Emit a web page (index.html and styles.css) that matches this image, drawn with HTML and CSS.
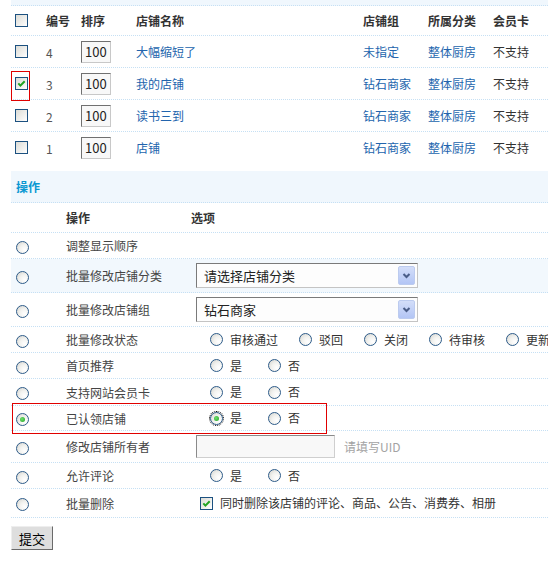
FILE: index.html
```html
<!DOCTYPE html>
<html lang="zh-CN">
<head>
<meta charset="utf-8">
<title>店铺管理</title>
<link rel="stylesheet" href="styles.css">
</head>
<body>
<div class="page">
  <div class="top-strip"></div>

  <div class="list">
    <div class="list-row list-head">
      <span class="c-check"><span class="cb"></span></span>
      <span>编号</span>
      <span>排序</span>
      <span>店铺名称</span>
      <span>店铺组</span>
      <span>所属分类</span>
      <span>会员卡</span>
    </div>
    <div class="list-row">
      <span class="c-check"><span class="cb"></span></span>
      <span class="num">4</span>
      <span><span class="txt order">100</span></span>
      <span><a class="link">大幅缩短了</a></span>
      <span><a class="link">未指定</a></span>
      <span><a class="link">整体厨房</a></span>
      <span>不支持</span>
    </div>
    <div class="list-row">
      <span class="c-check"><span class="cb checked"><svg viewBox="0 0 11 11" width="11" height="11"><path d="M2.3 5.4 L4.4 7.6 L8.7 3.2" fill="none" stroke="#22a322" stroke-width="2"/></svg></span></span>
      <span class="num">3</span>
      <span><span class="txt order">100</span></span>
      <span><a class="link">我的店铺</a></span>
      <span><a class="link">钻石商家</a></span>
      <span><a class="link">整体厨房</a></span>
      <span>不支持</span>
      <span class="mark mark-check"></span>
    </div>
    <div class="list-row">
      <span class="c-check"><span class="cb"></span></span>
      <span class="num">2</span>
      <span><span class="txt order">100</span></span>
      <span><a class="link">读书三到</a></span>
      <span><a class="link">钻石商家</a></span>
      <span><a class="link">整体厨房</a></span>
      <span>不支持</span>
    </div>
    <div class="list-row last">
      <span class="c-check"><span class="cb"></span></span>
      <span class="num">1</span>
      <span><span class="txt order">100</span></span>
      <span><a class="link">店铺</a></span>
      <span><a class="link">钻石商家</a></span>
      <span><a class="link">整体厨房</a></span>
      <span>不支持</span>
    </div>
  </div>

  <div class="section-title">操作</div>

  <div class="ops">
    <div class="op-row op-head">
      <span></span>
      <span>操作</span>
      <span>选项</span>
    </div>

    <div class="op-row">
      <span class="c-radio"><span class="rd"></span></span>
      <span class="op-label">调整显示顺序</span>
      <span></span>
    </div>

    <div class="op-row is-select hover">
      <span class="c-radio"><span class="rd"></span></span>
      <span class="op-label">批量修改店铺分类</span>
      <span class="opt-select">
        <span class="sel"><span class="sel-text">请选择店铺分类</span><span class="sel-btn"><svg viewBox="0 0 15 17" width="15" height="17"><path d="M4.5 7 L7.5 10 L10.5 7" fill="none" stroke="#4a5d88" stroke-width="2"/></svg></span></span>
      </span>
    </div>

    <div class="op-row is-select">
      <span class="c-radio"><span class="rd"></span></span>
      <span class="op-label">批量修改店铺组</span>
      <span class="opt-select">
        <span class="sel"><span class="sel-text">钻石商家</span><span class="sel-btn"><svg viewBox="0 0 15 17" width="15" height="17"><path d="M4.5 7 L7.5 10 L10.5 7" fill="none" stroke="#4a5d88" stroke-width="2"/></svg></span></span>
      </span>
    </div>

    <div class="op-row">
      <span class="c-radio"><span class="rd"></span></span>
      <span class="op-label">批量修改状态</span>
      <span class="opt-radios status">
        <span class="choice"><span class="rd"></span>审核通过</span>
        <span class="choice"><span class="rd"></span>驳回</span>
        <span class="choice"><span class="rd"></span>关闭</span>
        <span class="choice"><span class="rd"></span>待审核</span>
        <span class="choice"><span class="rd"></span>更新</span>
      </span>
    </div>

    <div class="op-row">
      <span class="c-radio"><span class="rd"></span></span>
      <span class="op-label">首页推荐</span>
      <span class="opt-radios">
        <span class="choice"><span class="rd"></span>是</span>
        <span class="choice"><span class="rd"></span>否</span>
      </span>
    </div>

    <div class="op-row is-wide">
      <span class="c-radio"><span class="rd"></span></span>
      <span class="op-label">支持网站会员卡</span>
      <span class="opt-radios">
        <span class="choice"><span class="rd"></span>是</span>
        <span class="choice"><span class="rd"></span>否</span>
      </span>
    </div>

    <div class="op-row is-narrow">
      <span class="c-radio"><span class="rd checked"></span></span>
      <span class="op-label">已认领店铺</span>
      <span class="opt-radios">
        <span class="choice"><span class="rd checked focus"></span>是</span>
        <span class="choice"><span class="rd"></span>否</span>
      </span>
      <span class="mark mark-row"></span>
    </div>

    <div class="op-row is-input">
      <span class="c-radio"><span class="rd"></span></span>
      <span class="op-label">修改店铺所有者</span>
      <span class="opt-input">
        <span class="txt uid"></span>
        <span class="hint">请填写UID</span>
      </span>
    </div>

    <div class="op-row">
      <span class="c-radio"><span class="rd"></span></span>
      <span class="op-label">允许评论</span>
      <span class="opt-radios">
        <span class="choice"><span class="rd"></span>是</span>
        <span class="choice"><span class="rd"></span>否</span>
      </span>
    </div>

    <div class="op-row is-check">
      <span class="c-radio"><span class="rd"></span></span>
      <span class="op-label">批量删除</span>
      <span class="opt-check">
        <span class="cb checked"><svg viewBox="0 0 11 11" width="11" height="11"><path d="M2.3 5.4 L4.4 7.6 L8.7 3.2" fill="none" stroke="#22a322" stroke-width="2"/></svg></span>
        <span>同时删除该店铺的评论、商品、公告、消费券、相册</span>
      </span>
    </div>
  </div>

  <button class="submit" type="button">提交</button>
</div>
</body>
</html>
```

FILE: styles.css
```css
html, body {
  margin: 0;
  padding: 0;
  overflow: hidden;
  background: #fff;
}

body {
  font-family: "Noto Sans CJK SC", "Microsoft YaHei", sans-serif;
  font-size: 12px;
  line-height: 18px;
  color: #333;
}

.page {
  padding-left: 11px;
}

.top-strip {
  height: 5px;
  background: #f0f7fd;
  border-bottom: 1px dotted #c6e0f4;
}

/* ---------- list table ---------- */
.list-row {
  position: relative;
  display: grid;
  grid-template-columns: 35px 35px 55px 227px 65px 65px 1fr;
  align-items: center;
  height: 31px;
  border-bottom: 1px dotted #c6e0f4;
  white-space: nowrap;
}

.list-row.last {
  border-bottom: none;
}

.list-head {
  height: 29px;
  font-weight: bold;
  color: #333;
}

.c-check {
  display: flex;
  align-items: center;
  padding-left: 4px;
}

.num {
  color: #555;
  padding-top: 2px;
}

.link {
  color: #2264ad;
  text-decoration: none;
}

/* inset text box */
.txt {
  display: inline-block;
  box-sizing: border-box;
  border: 1px solid;
  border-color: #707070 #c8c8c8 #c8c8c8 #707070;
  background: #f8f8f8;
  vertical-align: middle;
}

.order {
  width: 30px;
  height: 22px;
  line-height: 20px;
  padding-left: 3px;
  font-size: 13px;
  color: #222;
}

/* checkbox (XP look) */
.cb {
  display: inline-flex;
  align-items: center;
  justify-content: center;
  box-sizing: border-box;
  width: 13px;
  height: 13px;
  border: 1px solid #1c5180;
  background: linear-gradient(135deg, #dcdcd6 0%, #f4f4f2 70%, #ffffff 100%);
  flex: none;
}

/* radio (XP look) */
.rd {
  position: relative;
  display: inline-block;
  box-sizing: border-box;
  width: 13px;
  height: 13px;
  border: 1px solid #2d5b89;
  border-radius: 50%;
  background: radial-gradient(circle at 70% 70%, #ffffff 0%, #f2f2ef 45%, #d2d2cc 100%);
  flex: none;
}

.rd.checked::after {
  content: "";
  position: absolute;
  left: 3px;
  top: 3px;
  width: 5px;
  height: 5px;
  border-radius: 50%;
  background: radial-gradient(circle at 40% 40%, #6fe06f 0%, #21a121 100%);
}

.rd.focus {
  outline: 1px dotted #000;
  outline-offset: 0;
}

/* annotation boxes */
.mark {
  position: absolute;
  box-sizing: border-box;
  border: 1px solid #e00000;
  pointer-events: none;
}

.mark-check {
  left: 0;
  top: 3px;
  width: 19px;
  height: 30px;
}

.mark-row {
  left: 1px;
  top: -3px;
  width: 315px;
  height: 31px;
}

/* ---------- section ---------- */
.section-title {
  margin-top: 8px;
  height: 31px;
  line-height: 31px;
  padding-left: 5px;
  background: #f0f7fd;
  border-bottom: 1px dotted #c6e0f4;
  color: #0a98d2;
  font-weight: bold;
}

.op-row {
  position: relative;
  display: grid;
  grid-template-columns: 55px 125px 1fr;
  align-items: center;
  height: 25px;
  border-bottom: 1px dotted #c6e0f4;
  white-space: nowrap;
}

.op-head {
  height: 29px;
  font-weight: bold;
}

.op-row.hover {
  background: #f2f8fd;
}

.op-row.is-select {
  height: 33px;
}

.op-row.is-wide {
  height: 26px;
}

.op-row.is-narrow {
  height: 24px;
}

.op-row.is-input {
  height: 31px;
}

.op-row.is-check {
  height: 28px;
}

.c-radio {
  display: flex;
  align-items: center;
  padding-left: 5px;
  padding-top: 3px;
}

.op-label {
  color: #444;
  padding-top: 1px;
}

.opt-select {
  padding-left: 5px;
  display: flex;
}

.sel {
  display: flex;
  align-items: center;
  box-sizing: border-box;
  width: 222px;
  height: 25px;
  border: 1px solid;
  border-color: #7a7a7a #c4c4c4 #c4c4c4 #7a7a7a;
  background: #fdfdfd;
  padding-left: 7px;
  padding-right: 2px;
  color: #222;
  font-size: 13px;
}

.sel-btn {
  margin-left: auto;
  display: flex;
  box-sizing: border-box;
  width: 17px;
  height: 19px;
  border: 1px solid #bccbef;
  border-radius: 2px;
  background: linear-gradient(#d3def9, #b3c5f5);
}

.opt-radios {
  display: flex;
  align-items: center;
  padding-left: 19px;
}

.choice {
  display: inline-flex;
  align-items: center;
  gap: 7px;
  margin-right: 26px;
  color: #333;
}

.status .choice {
  margin-right: 21px;
}

.opt-input {
  display: flex;
  align-items: center;
  padding-left: 5px;
  gap: 9px;
}

.uid {
  width: 139px;
  height: 23px;
  border-color: #8a8a8a #cfcfcf #cfcfcf #8a8a8a;
}

.hint {
  color: #a3a3a3;
}

.opt-check {
  display: flex;
  align-items: center;
  padding-left: 9px;
  gap: 7px;
}

.submit {
  margin-top: 8px;
  width: 42px;
  height: 24px;
  padding: 0;
  border: 1px solid;
  border-color: #eeeeee #6a6a6a #6a6a6a #eeeeee;
  background: #dedede;
  font-family: "Noto Sans CJK SC", "Microsoft YaHei", sans-serif;
  font-size: 13px;
  color: #000;
}
```
